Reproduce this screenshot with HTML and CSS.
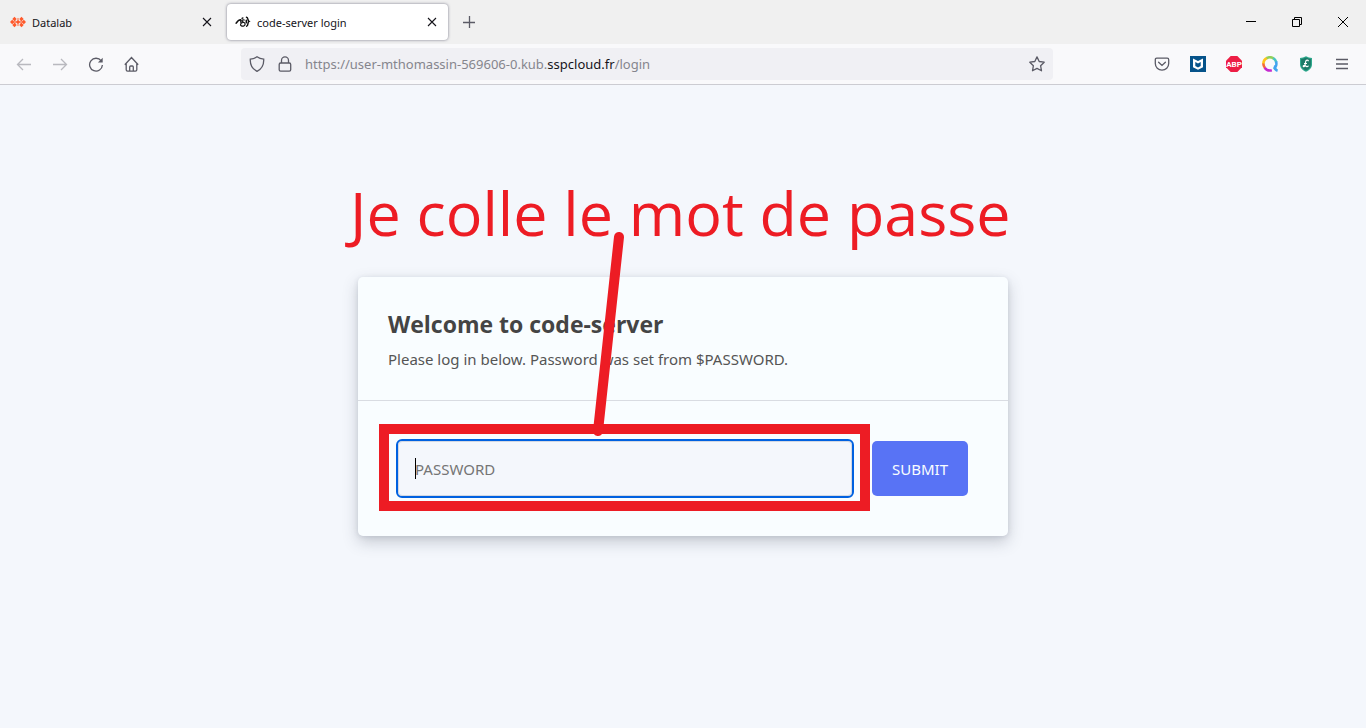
FILE: index.html
```html
<!DOCTYPE html>
<html lang="fr">
<head>
<meta charset="utf-8">
<title>code-server login</title>
<link rel="stylesheet" href="styles.css">
</head>
<body>
<div class="browser">
  <header class="chrome">
    <div class="tabstrip">
      <div class="tab">
        <svg class="favicon" width="16" height="16" viewBox="0 0 16 16" fill="#ff5a2c"><path d="M4.5 2.8 6.7 5 4.5 7.200 2.300 5zM11.500 2.800 13.700 5 11.500 7.200 9.300 5zM2.200 5.700 4.400 8 2.200 10.300 0 8zM8 5.700 10.200 8 8 10.300 5.800 8zM13.800 5.700 16 8 13.800 10.300 11.600 8zM4.500 8.800 6.700 11 4.500 13.200 2.300 11zM11.500 8.800 13.700 11 11.500 13.200 9.300 11z"/><path d="M5 5.800 7.200 8 5 10.200 2.800 8zM11 5.800 13.200 8 11 10.200 8.800 8zM8 3.800 9.300 5 8 6.200 6.700 5zM8 9.800 9.300 11 8 12.200 6.700 11z" opacity=".6"/></svg>
        <span class="tab-title">Datalab</span>
        <button class="icon-btn tab-close" aria-label="Fermer Datalab"><svg width="10" height="10" viewBox="0 0 10 10"><path d="M1 1l8 8M9 1 1 9" stroke="#15141a" stroke-width="1.1"/></svg></button>
      </div>
      <div class="tab tab-active">
        <svg class="favicon" width="16" height="16" viewBox="0 0 16 16" fill="none" stroke="#111" stroke-linecap="round"><path d="M1.200 9.200C2.300 7.400 3.800 5.800 5.600 5.700" stroke-width="1.600"/><path d="M5.600 5.700c.5 1.200-.3 2.200.5 3.200M9.300 6C7 5.300 6 7.200 8.200 8c2.200.8 2.700 3 .7 3.900-1.900.8-4.200-.4-3.100-2.200.6-1 1.700-1.400 2.700-1.300M7 4.400l1-.5" stroke-width="1.200"/><path d="M11.500 3.300c2 .2.700 3.100 2.500 4.100-1.800.9-.3 3.900-2.300 4.700M11.300 6.200v2.600" stroke-width="1.500"/></svg>
        <span class="tab-title">code-server login</span>
        <button class="icon-btn tab-close" aria-label="Fermer code-server login"><svg width="10" height="10" viewBox="0 0 10 10"><path d="M1 1l8 8M9 1 1 9" stroke="#15141a" stroke-width="1.1"/></svg></button>
      </div>
      <button class="icon-btn new-tab" aria-label="Nouvel onglet"><svg width="12" height="12" viewBox="0 0 12 12"><path d="M6.500 0v12M0 6.500h12" stroke="#5b5b66" stroke-width="1.300"/></svg></button>
      <div class="window-controls">
        <button class="icon-btn" aria-label="Réduire"><svg width="10" height="10" viewBox="0 0 10 10"><path d="M0 4.500h10" stroke="#000"/></svg></button>
        <button class="icon-btn" aria-label="Restaurer"><svg width="10" height="10" viewBox="0 0 10 10" fill="none" stroke="#000"><path d="M.5 2.500h7v7h-7zM2.500 2.500v-2h7v7h-2"/></svg></button>
        <button class="icon-btn" aria-label="Fermer"><svg width="10" height="10" viewBox="0 0 10 10"><path d="M0 0l10 10M10 0 0 10" stroke="#000"/></svg></button>
      </div>
    </div>
    <div class="toolbar">
      <nav class="nav-buttons">
        <button class="icon-btn faded" aria-label="Précédent"><svg class="glyph" viewBox="0 0 16 16"><path d="M15 8.500H1.500M7 3 1.500 8.500 7 14"/></svg></button>
        <button class="icon-btn faded" aria-label="Suivant"><svg class="glyph" viewBox="0 0 16 16"><path d="M1 8.500h13.500M9 3l5.500 5.500L9 14"/></svg></button>
        <button class="icon-btn" aria-label="Actualiser"><svg class="glyph" viewBox="0 0 16 16"><path d="M13.200 4.900A6.400 6.400 0 1 0 14.400 9"/><path d="M14.700 1.800v4.800H9.900z" fill="#5b5b66" stroke="none"/></svg></button>
        <button class="icon-btn" aria-label="Accueil"><svg class="glyph" viewBox="0 0 16 16"><path d="M.8 8.800 7.500 1.500l6.700 7.300M2.200 7.400v6.400q0 1.400 1.400 1.400h7.800q1.400 0 1.400-1.400V7.400M5.700 15v-4q0-1 1-1h1.600q1 0 1 1v4"/></svg></button>
      </nav>
      <div class="urlbar">
        <svg class="glyph" viewBox="0 0 16 16"><path d="M8 .8c2 1.500 4.200 2.200 6.700 2.400C15 9 12.800 12.800 8 15.300 3.200 12.800 1 9 1.300 3.200 3.800 3 6 2.300 8 .8z"/></svg>
        <svg class="glyph" viewBox="0 0 16 16"><rect x="2.200" y="7" width="11.500" height="8.200" rx="1.400"/><path d="M4.500 7V4.400a3.500 3.500 0 0 1 7 0V7"/></svg>
        <div class="url">https://user-mthomassin-569606-0.kub.<b>sspcloud.fr</b>/login</div>
        <button class="icon-btn" aria-label="Marque-page"><svg class="glyph" viewBox="0 0 16 16"><path stroke-linejoin="round" d="M8 .9l2.200 4.600 5 .7-3.600 3.500.9 5.100L8 12.400l-4.500 2.400.9-5.100L.8 6.200l5-.7z"/></svg></button>
      </div>
      <div class="extensions">
        <button class="icon-btn" aria-label="Pocket"><svg class="glyph" viewBox="0 0 16 16"><path d="M2.800 2.200h10.400q1.500 0 1.500 1.500V7.500a6.700 6.700 0 0 1-13.400 0V3.700q0-1.500 1.500-1.500z"/><path d="M4.600 6.200 8 9.400l3.400-3.200" stroke-linecap="round"/></svg></button>
        <button class="icon-btn" aria-label="McAfee"><svg width="16" height="16" viewBox="0 0 16 16"><path fill="#06538a" d="M0 0h16v16H0z"/><path fill="#fff" d="M3 2.500 8 5l5-2.500v8.700L8 13.800l-5-2.600zM5.300 6v4L8 11.400l2.700-1.400V6L8 7.400z" fill-rule="evenodd"/></svg></button>
        <button class="icon-btn" aria-label="Adblock Plus"><svg width="16" height="16" viewBox="0 0 16 16"><path fill="#ed1e45" d="M4.700 0h6.600L16 4.700v6.600L11.300 16H4.700L0 11.300V4.700z"/><text class="abp" x="8" y="11" text-anchor="middle">ABP</text></svg></button>
        <button class="icon-btn" aria-label="Qwant"><svg width="16" height="16" viewBox="0 0 16 16" fill="none" stroke-width="2.600"><path stroke="#ffc51b" d="M1.400 8A6.500 6.500 0 0 1 5 2"/><path stroke="#92d05b" d="M4.600 2.200A6.500 6.500 0 0 1 11.500 2.400"/><path stroke="#48c4c0" d="M11.200 2.200A6.500 6.500 0 0 1 14.200 6"/><path stroke="#42a4f0" d="M14 5.500c1 3-.2 6.200-2.400 7.500M13.300 9.500c-.6 2.200.1 4.500 2.300 5.200"/><path stroke="#f36a38" d="M1.400 7.500A6.500 6.500 0 0 0 3 12"/><path stroke="#c52acf" d="M2.700 11.700A6.500 6.500 0 0 0 9.800 14.200"/></svg></button>
        <button class="icon-btn" aria-label="Bouclier"><svg width="16" height="16" viewBox="0 0 16 16"><path fill="#2fa98d" d="M8 .3c2 1 4 1.500 6 1.600v6.500c0 3.400-2.600 5.800-6 7.300-3.400-1.500-6-3.900-6-7.300V1.900C4 1.800 6 1.300 8 .3z"/><path fill="#1c7a68" d="M8 1.500c1.600.7 3.200 1.200 4.900 1.400v5.500c0 2.800-2 4.800-4.900 6.100-2.900-1.300-4.900-3.300-4.900-6.100V2.900C4.800 2.700 6.400 2.200 8 1.500z"/><path fill="none" stroke="#fff" stroke-width="1.200" d="M10.300 5.200C10.200 3.500 8 3.700 7.700 5.500L7 9.200c-.3 1.500-1.700 2-1.800 1 .1-1.200 2.400-.2 3.200.2.900.4 1.800 0 2-.8M6 7.500h3"/></svg></button>
        <button class="icon-btn" aria-label="Menu"><svg class="glyph" viewBox="0 0 16 16"><path d="M2 3.500h12M2 8h12M2 12.500h12"/></svg></button>
      </div>
    </div>
  </header>
  <main class="page">
    <section class="card">
      <div class="card-header">
        <h1 class="card-title">Welcome to code-server</h1>
        <p class="card-sub">Please log in below. Password was set from $PASSWORD.</p>
      </div>
      <form class="login-form">
        <div class="field">
          <input class="password" type="password" placeholder="PASSWORD" aria-label="PASSWORD">
          <span class="caret"></span>
          <span class="highlight"></span>
        </div>
        <button class="submit" type="button">SUBMIT</button>
      </form>
      <p class="note">Je colle le mot de passe</p>
      <svg class="pointer" width="40" height="210" viewBox="0 0 40 210"><path d="M30 10 9 204" stroke="#ed1c24" stroke-width="10" stroke-linecap="round"/></svg>
    </section>
  </main>
</div>
</body>
</html>
```
FILE: styles.css
```css
* { box-sizing: border-box; }

body {
  margin: 0;
  font-family: "Noto Sans", "Open Sans", sans-serif;
}

.browser {
  display: flex;
  flex-direction: column;
  min-height: 100vh;
}

.icon-btn {
  display: flex;
  align-items: center;
  justify-content: center;
  padding: 0;
  border: 0;
  background: none;
}

.glyph {
  flex: none;
  width: 16px;
  height: 16px;
  fill: none;
  stroke: #5b5b66;
  stroke-width: 1.3;
}

.faded { opacity: 0.4; }

/* Tab strip */
.tabstrip {
  display: flex;
  align-items: center;
  height: 44px;
  background: #f0f0f0;
}

.tab {
  display: flex;
  align-items: center;
  gap: 6px;
  width: 221px;
  height: 36px;
  padding: 0 11px 0 8px;
  border-radius: 4px;
  font-size: 11px;
  color: #15141a;
}

.tab:first-child { width: 227px; padding: 0 15px 0 10px; }

.tab-active {
  background: #fff;
  box-shadow: 0 0 3px rgba(90, 90, 110, 0.8);
}

.tab-title {
  flex: 1;
  white-space: nowrap;
}

.new-tab { width: 42px; height: 38px; }

.window-controls {
  display: flex;
  margin-left: auto;
}

.window-controls .icon-btn { width: 46px; height: 44px; }

/* Toolbar */
.toolbar {
  display: flex;
  align-items: center;
  height: 41px;
  border-bottom: 1px solid #ccccd2;
  background: #f9f9fb;
}

.nav-buttons {
  display: flex;
  gap: 20px;
  padding-left: 16px;
}

.urlbar {
  display: flex;
  flex: 1;
  align-items: center;
  gap: 12px;
  height: 32px;
  margin: 0 101px;
  padding: 0 8px;
  border-radius: 4px;
  background: #f0f0f4;
}

.url {
  flex: 1;
  font-size: 13px;
  color: #85858d;
  white-space: nowrap;
}

.url b { font-weight: 400; color: #15141a; }

.extensions {
  display: flex;
  gap: 20px;
  padding-right: 16px;
}

.abp {
  font: 700 8px "Roboto", sans-serif;
  fill: #fff;
}

/* Login page */
.page {
  display: flex;
  flex: 1;
  align-items: center;
  justify-content: center;
  background: #f4f7fc;
}

.card {
  position: relative;
  width: 100%;
  max-width: 650px;
  border-radius: 5px;
  background: #f9fdff;
  box-shadow: 0 6px 15px rgba(60, 66, 87, 0.25), 0 1px 5px rgba(60, 66, 87, 0.12);
  color: #444;
}

.card-header {
  padding: 30px;
  border-bottom: 1px solid #d9dce2;
}

.card-title {
  margin: 0 0 8px;
  font: 700 23px/34px "Open Sans", "Noto Sans", sans-serif;
}

.card-sub {
  margin: 0;
  font-size: 15px;
  line-height: 21px;
  color: #555;
}

.login-form {
  display: flex;
  gap: 20px;
  padding: 40px;
}

.field {
  position: relative;
  flex: 1;
}

.password {
  display: block;
  width: 100%;
  height: 55px;
  padding: 16px;
  border: 1px solid #d3d8e2;
  border-radius: 4px;
  outline: 2px solid #0061e0;
  background: #f4f7fc;
  font: 15px "Noto Sans", "Open Sans", sans-serif;
}

.password::placeholder { color: #757575; opacity: 1; }

.caret {
  position: absolute;
  top: 17px;
  left: 17px;
  width: 1px;
  height: 21px;
  background: #000;
}

.highlight {
  position: absolute;
  inset: -17px -18px -15px -19px;
  border: 10px solid #ed1c24;
  pointer-events: none;
}

.submit {
  width: 96px;
  border: 0;
  border-radius: 5px;
  background: #5873f5;
  color: #f9fdff;
  font: 15px "Noto Sans", "Open Sans", sans-serif;
}

/* Hand-placed annotations over the page */
.note {
  position: absolute;
  bottom: 100%;
  left: -8px;
  margin: 0 0 22px;
  font: 61px/84px "Open Sans", "Noto Sans", sans-serif;
  color: #ed1c24;
  white-space: nowrap;
}

.pointer {
  position: absolute;
  top: -50px;
  left: 231px;
  pointer-events: none;
}
```
